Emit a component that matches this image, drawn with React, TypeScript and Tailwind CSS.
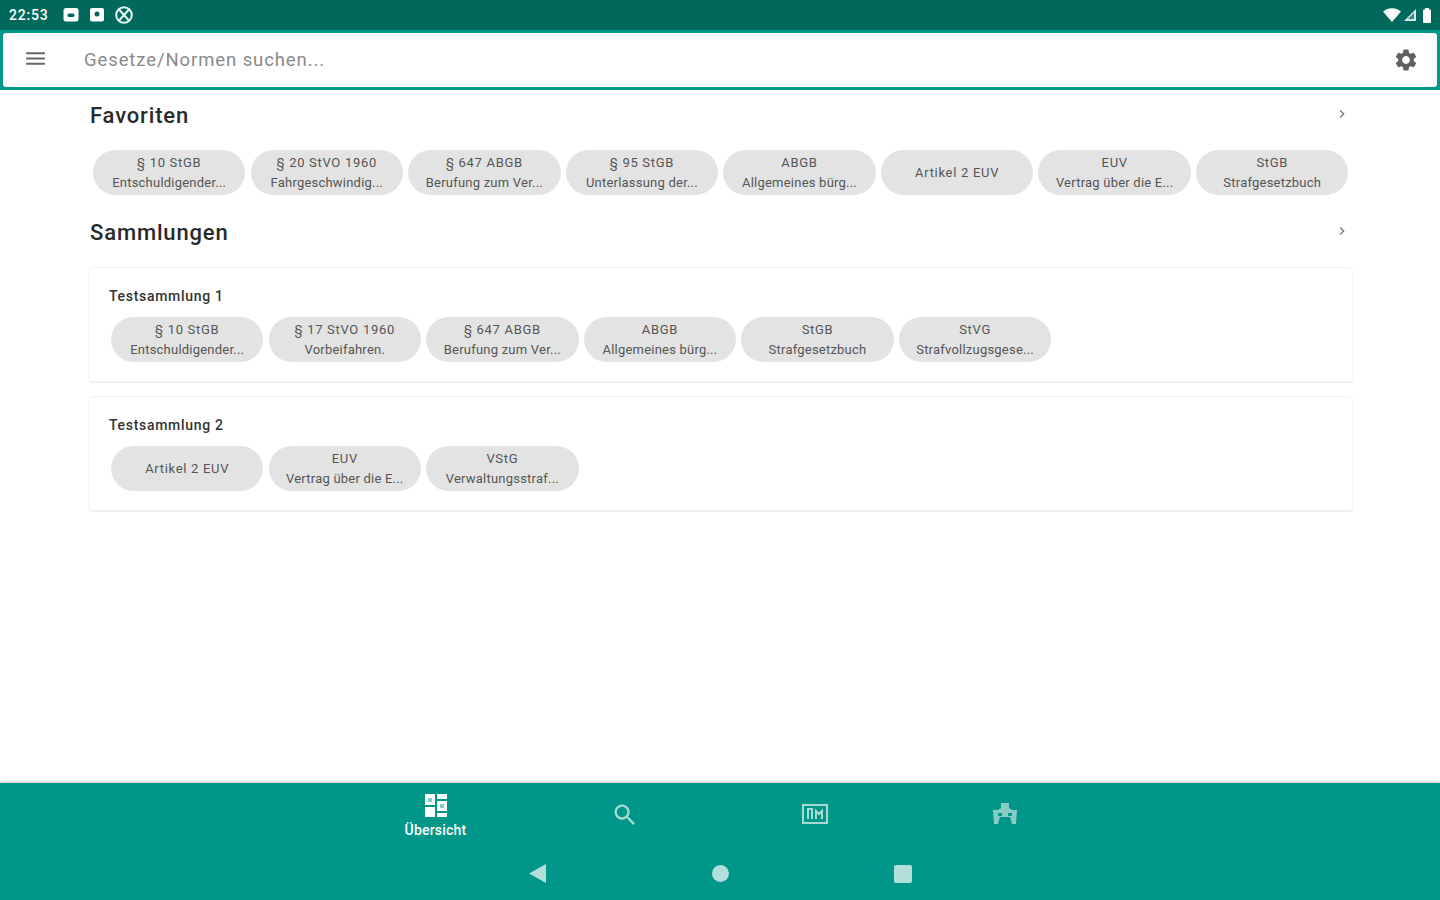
import React from "react";
import { MdSearch, MdSettings, MdMenu, MdChevronRight } from "react-icons/md";

type Chip = { a: string; b?: string };

const favs: Chip[] = [
  { a: "§ 10 StGB", b: "Entschuldigender..." },
  { a: "§ 20 StVO 1960", b: "Fahrgeschwindig..." },
  { a: "§ 647 ABGB", b: "Berufung zum Ver..." },
  { a: "§ 95 StGB", b: "Unterlassung der..." },
  { a: "ABGB", b: "Allgemeines bürg..." },
  { a: "Artikel 2 EUV" },
  { a: "EUV", b: "Vertrag über die E..." },
  { a: "StGB", b: "Strafgesetzbuch" },
];
const c1: Chip[] = [
  { a: "§ 10 StGB", b: "Entschuldigender..." },
  { a: "§ 17 StVO 1960", b: "Vorbeifahren." },
  { a: "§ 647 ABGB", b: "Berufung zum Ver..." },
  { a: "ABGB", b: "Allgemeines bürg..." },
  { a: "StGB", b: "Strafgesetzbuch" },
  { a: "StVG", b: "Strafvollzugsgese..." },
];
const c2: Chip[] = [
  { a: "Artikel 2 EUV" },
  { a: "EUV", b: "Vertrag über die E..." },
  { a: "VStG", b: "Verwaltungsstraf..." },
];

function Chips({ items }: { items: Chip[] }) {
  return (
    <div className="flex gap-[5.2px]">
      {items.map((c, i) => (
        <div
          key={i}
          className="w-[152.4px] h-[45px] rounded-full bg-[#e3e3e3] flex flex-col items-center justify-center text-[13px] leading-[20px] text-[#555555]"
        >
          <span className="tracking-[0.7px]">{c.a}</span>
          {c.b && <span className="tracking-[0.22px]">{c.b}</span>}
        </div>
      ))}
    </div>
  );
}

function Heading({ children }: { children: React.ReactNode }) {
  return (
    <div className="flex items-center justify-between h-[30px]">
      <span className="text-[22px] font-medium tracking-[0.85px] text-[#2a2a2a]">{children}</span>
      <MdChevronRight className="text-[#777777] w-[16px] h-[16px] mr-[2px] -mt-[2px]" />
    </div>
  );
}

function Card({ title, items }: { title: string; items: Chip[] }) {
  return (
    <div className="h-[115px] rounded-[4px] border border-[#f3f3f3] shadow-[0_1px_1px_rgba(0,0,0,0.07)] pt-[19px]">
      <div className="pl-[20px] text-[14px] leading-[18px] font-medium tracking-[0.7px] text-[#333333] mb-[12px]">{title}</div>
      <div className="pl-[22px]">
        <Chips items={items} />
      </div>
    </div>
  );
}

function NavItem({ children, label }: { children: React.ReactNode; label?: string }) {
  return (
    <div className="w-[190px] h-[68px] flex flex-col items-center pt-[11px]">
      {children}
      {label && <span className="text-[14px] leading-[16px] font-medium tracking-[0.2px] text-white mt-[4px] ml-[1px]">{label}</span>}
    </div>
  );
}

export default function App() {
  return (
    <div className="w-[1440px] h-[900px] flex flex-col bg-white overflow-hidden font-['Roboto',sans-serif]">
      <div className="h-[30px] bg-[#00695c] flex items-center justify-between pl-[9px] pr-[8px] text-white">
        <div className="flex items-center">
          <span className="text-[14px] font-medium w-[53px] tracking-[0.8px]">22:53</span>
          <svg width="18" height="18" viewBox="0 0 18 18" className="mr-[8px]">
            <rect x="1.5" y="2" width="15" height="13.5" rx="2.5" fill="#fff" />
            <rect x="5.5" y="7.5" width="7" height="3.5" rx="1.5" fill="#00695c" />
          </svg>
          <svg width="18" height="18" viewBox="0 0 18 18" className="mr-[8px]">
            <rect x="2" y="2" width="14" height="13.5" rx="2" fill="#fff" />
            <circle cx="9" cy="8" r="2.5" fill="#00695c" />
          </svg>
          <svg width="20" height="20" viewBox="0 0 20 20" fill="none" stroke="#e6f2f0" strokeWidth="2">
            <circle cx="10" cy="10" r="7.8" />
            <path d="M5 4.5 15 15.5M15 4.5 5 15.5" strokeWidth="2" />
          </svg>
        </div>
        <div className="flex items-center gap-[2px]">
          <svg width="18" height="14" viewBox="0 0 18 14"><path d="M0 3.5C5 -1 13 -1 18 3.5L9 14Z" fill="#fff" /></svg>
          <svg width="14" height="14" viewBox="0 0 14 14" fill="none">
            <path d="M13 1V13H1Z" fill="#ffffff" fillOpacity="0.85" />
            <path d="M11 5V11H5Z" fill="#00695c" fillOpacity="0.75" />
          </svg>
          <svg width="10" height="15" viewBox="0 0 10 15" className="ml-[3px]">
            <rect x="3" y="0" width="4" height="2" fill="#fff" />
            <rect x="1" y="1.5" width="8" height="13.5" rx="1" fill="#fff" />
          </svg>
        </div>
      </div>

      <div className="h-[60px] bg-[#009688] px-[3px] pt-[3px] pb-[3px]">
        <div className="h-full bg-white rounded-[3px] flex items-center pl-[20px] pr-[18px]">
          <MdMenu className="w-[25px] h-[25px] text-[#666666] -mt-[3px]" />
          <span className="ml-[36px] flex-1 text-[18.5px] tracking-[0.9px] text-[#8a8a8a] mt-[1px]">Gesetze/Normen suchen...</span>
          <MdSettings className="w-[26px] h-[26px] text-[#616161] -mt-[1px]" />
        </div>
      </div>

      <div className="flex-1 pl-[89px] pr-[88px]">
        <div className="pl-[1px] pt-[10px]">
          <Heading>Favoriten</Heading>
        </div>
        <div className="pl-[4px] pt-[20px] pb-[22px]">
          <Chips items={favs} />
        </div>
        <div className="pl-[1px] mb-[20px]">
          <Heading>Sammlungen</Heading>
        </div>
        <div className="flex flex-col gap-[14px] -ml-[1px] -mr-[1px]">
          <Card title="Testsammlung 1" items={c1} />
          <Card title="Testsammlung 2" items={c2} />
        </div>
      </div>

      <div className="h-[117px] bg-[#009688] shadow-[0_-1px_3px_rgba(0,0,0,0.25)] flex flex-col">
        <div className="flex justify-center">
          <NavItem label="Übersicht">
            <svg width="24" height="24" viewBox="0 0 24 24" fill="#fff" className="ml-[1px]">
              <rect x="1" y="0" width="10" height="11" />
              <rect x="13" y="0" width="10" height="5" />
              <rect x="13" y="7" width="10" height="10" />
              <rect x="1" y="13" width="10" height="10" />
              <rect x="13" y="19" width="10" height="4" />
              <rect x="4" y="4" width="4" height="4" fill="#80cbc4" />
              <rect x="16" y="10" width="4" height="4" fill="#80cbc4" />
            </svg>
          </NavItem>
          <NavItem>
            <MdSearch className="w-[28px] h-[28px] text-[#a9dbd6] mt-[7px]" />
          </NavItem>
          <NavItem>
            <svg width="26" height="24" viewBox="0 0 26 24" fill="none" className="mt-[9px]" stroke="#a9dbd6">
              <rect x="1" y="2" width="24" height="18" strokeWidth="2" />
              <path d="M6 16V6h4v10M14 16V8l3 3 3-3v8" strokeWidth="2" />
            </svg>
          </NavItem>
          <NavItem>
            <svg width="26" height="26" viewBox="0 0 26 26" fill="#a9dbd6" fillOpacity="0.8" className="mt-[8px]">
              <path d="M9 1h8v5l3 2h5l-1 14h-4l-2-7H8l-2 7H2L1 8h5l3-2Z" />
              <path d="M6 11h4v3H6ZM16 11h4v3h-4Z" fill="#009688" fillOpacity="1" />
            </svg>
          </NavItem>
        </div>
        <div className="flex-1 flex items-center justify-center gap-[165px] pb-[4px]">
          <svg width="17" height="19" viewBox="0 0 17 19"><path d="M17 0V19L0 9.5Z" fill="#b2dfdb" /></svg>
          <div className="w-[17px] h-[17px] rounded-full bg-[#b2dfdb] ml-[1px]" />
          <div className="w-[18px] h-[18px] rounded-[2px] bg-[#b2dfdb]" />
        </div>
      </div>
    </div>
  );
}
